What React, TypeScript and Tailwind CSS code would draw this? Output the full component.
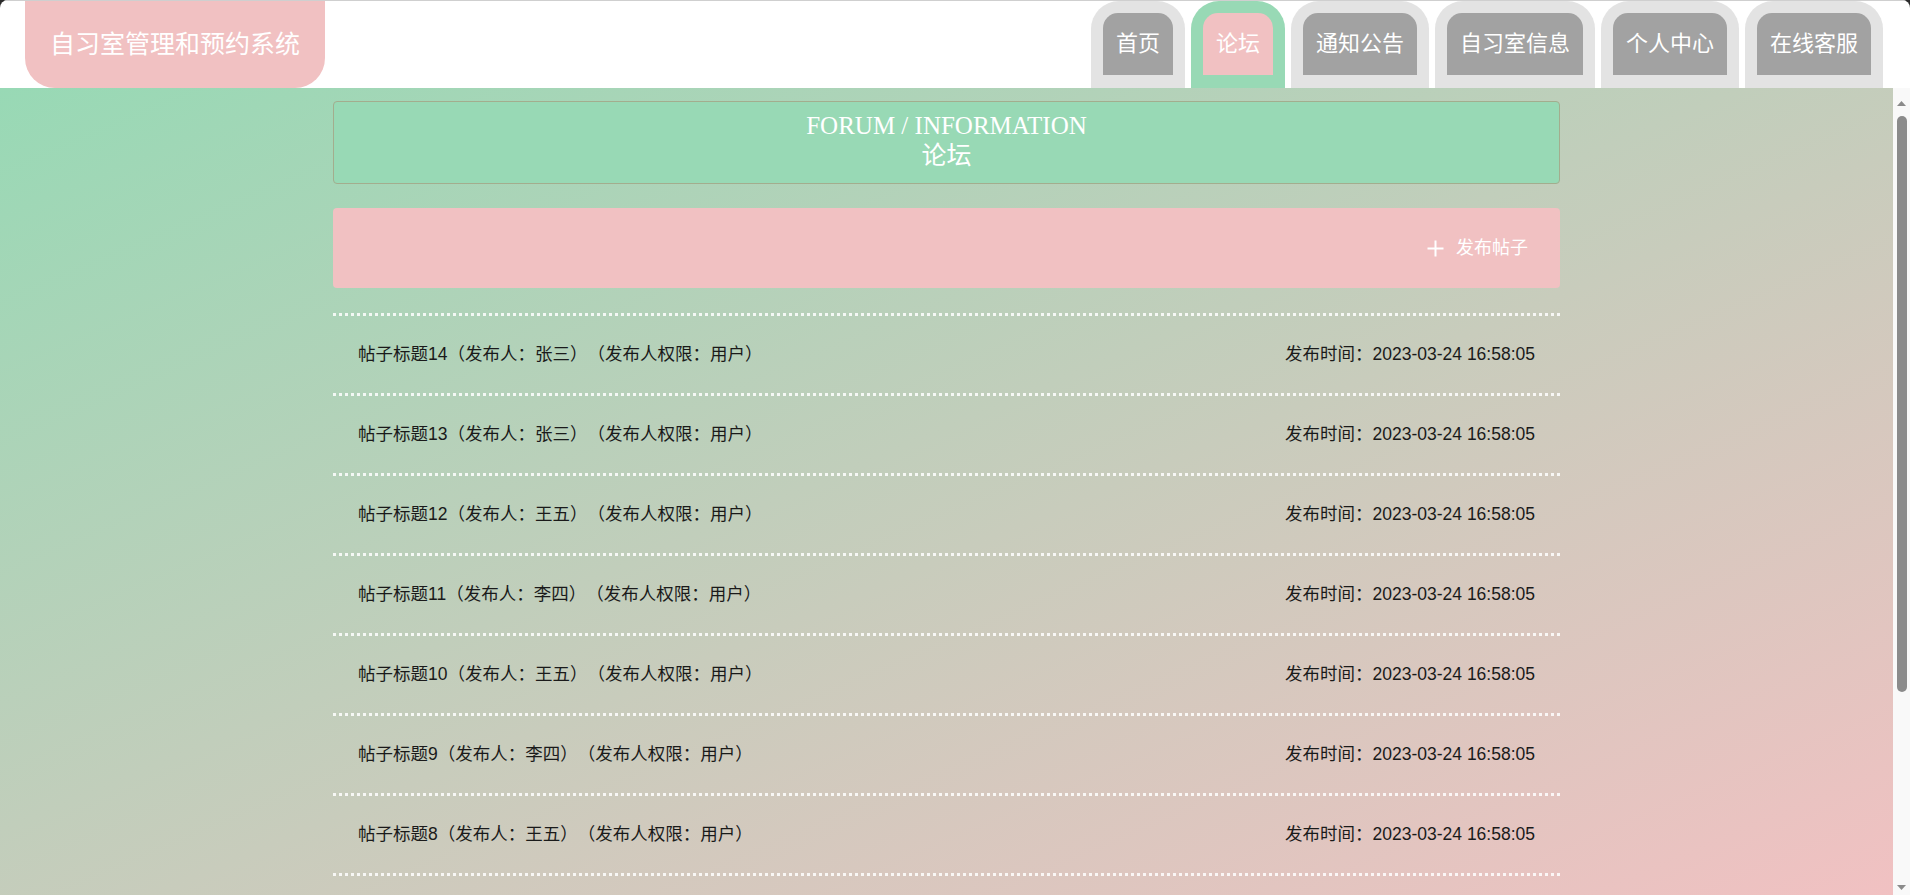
import React from 'react';

const tabs = [
  { label: '首页', active: false },
  { label: '论坛', active: true },
  { label: '通知公告', active: false },
  { label: '自习室信息', active: false },
  { label: '个人中心', active: false },
  { label: '在线客服', active: false },
];

const posts = [
  { n: 14, author: '张三' },
  { n: 13, author: '张三' },
  { n: 12, author: '王五' },
  { n: 11, author: '李四' },
  { n: 10, author: '王五' },
  { n: 9, author: '李四' },
  { n: 8, author: '王五' },
  { n: 7, author: '张三' },
  { n: 6, author: '李四' },
  { n: 5, author: '王五' },
];

export default function App() {
  return (
    <div className="h-screen w-full overflow-hidden bg-[#2b2b2b]">
      <div className="flex h-full flex-col overflow-hidden rounded-t-[8px] bg-white font-['Liberation_Sans','Noto_Sans_CJK_SC',sans-serif] [text-spacing-trim:space-all]">
        <header className="flex h-[88px] shrink-0 items-stretch justify-between border-t border-[#cfcfcf]">
          <div className="ml-[25px] flex w-[300px] items-center justify-center rounded-b-[30px] bg-[#f1c1c2] text-[25px] leading-none text-white">
            自习室管理和预约系统
          </div>
          <nav className="mr-[27px] flex items-end gap-[6px]">
            {tabs.map((t) => (
              <div
                key={t.label}
                className={
                  t.active
                    ? 'h-[87px] rounded-t-[28px] bg-[#98d9b5] px-[12px] pt-[12px] pb-[13px]'
                    : 'h-[87px] rounded-t-[28px] bg-[#e3e3e3] px-[12px] pt-[12px] pb-[13px]'
                }
              >
                <div
                  className={
                    t.active
                      ? 'flex h-full items-center rounded-t-[15px] bg-[#f1c1c2] px-[13px] text-[22px] leading-none text-white'
                      : 'flex h-full items-center rounded-t-[15px] bg-[#a2a2a2] px-[13px] text-[22px] leading-none text-white'
                  }
                >
                  {t.label}
                </div>
              </div>
            ))}
          </nav>
        </header>
        <div className="flex min-h-0 flex-1">
          <main className="min-w-0 flex-1 overflow-hidden bg-[linear-gradient(to_bottom_right,#98d9b5,#f1c1c2)]">
            <div className="mx-auto w-[1227px] pt-[13px] pb-[24px]">
              <div className="flex h-[83px] flex-col items-center justify-center rounded-[4px] border border-[#a3ad8e] bg-[#98d9b5] pb-[3px] font-['Liberation_Serif','Noto_Sans_CJK_SC',serif] text-[25px] leading-[30px] text-white">
                <div>FORUM / INFORMATION</div>
                <div>论坛</div>
              </div>
              <div className="mt-[24px] flex h-[80px] items-center justify-end rounded-[4px] bg-[#f1c1c2] pr-[32px]">
                <button className="flex items-center gap-[12px] text-[18px] leading-none text-white">
                  <svg width="17" height="17" viewBox="0 0 17 17" aria-hidden="true">
                    <path d="M8.5 0.5v16M0.5 8.5h16" stroke="white" strokeWidth="2" fill="none" />
                  </svg>
                  <span>发布帖子</span>
                </button>
              </div>
              <div className="mt-[25px]">
                {posts.map((p) => (
                  <div
                    key={p.n}
                    className="flex h-[80px] items-center justify-between border-t-[3px] border-dotted border-white/85 px-[25px] text-[17.5px] leading-none text-[#1a1a1a]"
                  >
                    <span>
                      帖子标题{p.n}（发布人：{p.author}）（发布人权限：用户）
                    </span>
                    <span>发布时间：2023-03-24 16:58:05</span>
                  </div>
                ))}
                <div className="flex h-[34px] items-center justify-center gap-[8px] border-t-[3px] border-dotted border-white/85 pt-[10px] text-[14px] text-[#555]">
                  <span className="rounded-[3px] bg-white/60 px-[8px] py-[2px]">上一页</span>
                  <span className="rounded-[3px] bg-[#98d9b5] px-[8px] py-[2px] text-white">1</span>
                  <span className="rounded-[3px] bg-white/60 px-[8px] py-[2px]">2</span>
                  <span className="rounded-[3px] bg-white/60 px-[8px] py-[2px]">下一页</span>
                </div>
              </div>
            </div>
          </main>
          <div className="flex w-[17px] shrink-0 flex-col items-center bg-[#f9f9f9]">
            <svg className="mt-[13px]" width="9" height="5" viewBox="0 0 9 5" aria-hidden="true">
              <path d="M0 5L4.5 0L9 5Z" fill="#8b8b8b" />
            </svg>
            <div className="mt-[10px] h-[576px] w-[10px] rounded-full bg-[#8b8b8b]" />
            <div className="flex-1" />
            <svg className="mb-[5px]" width="9" height="5" viewBox="0 0 9 5" aria-hidden="true">
              <path d="M0 0L4.5 5L9 0Z" fill="#8b8b8b" />
            </svg>
          </div>
        </div>
      </div>
    </div>
  );
}
